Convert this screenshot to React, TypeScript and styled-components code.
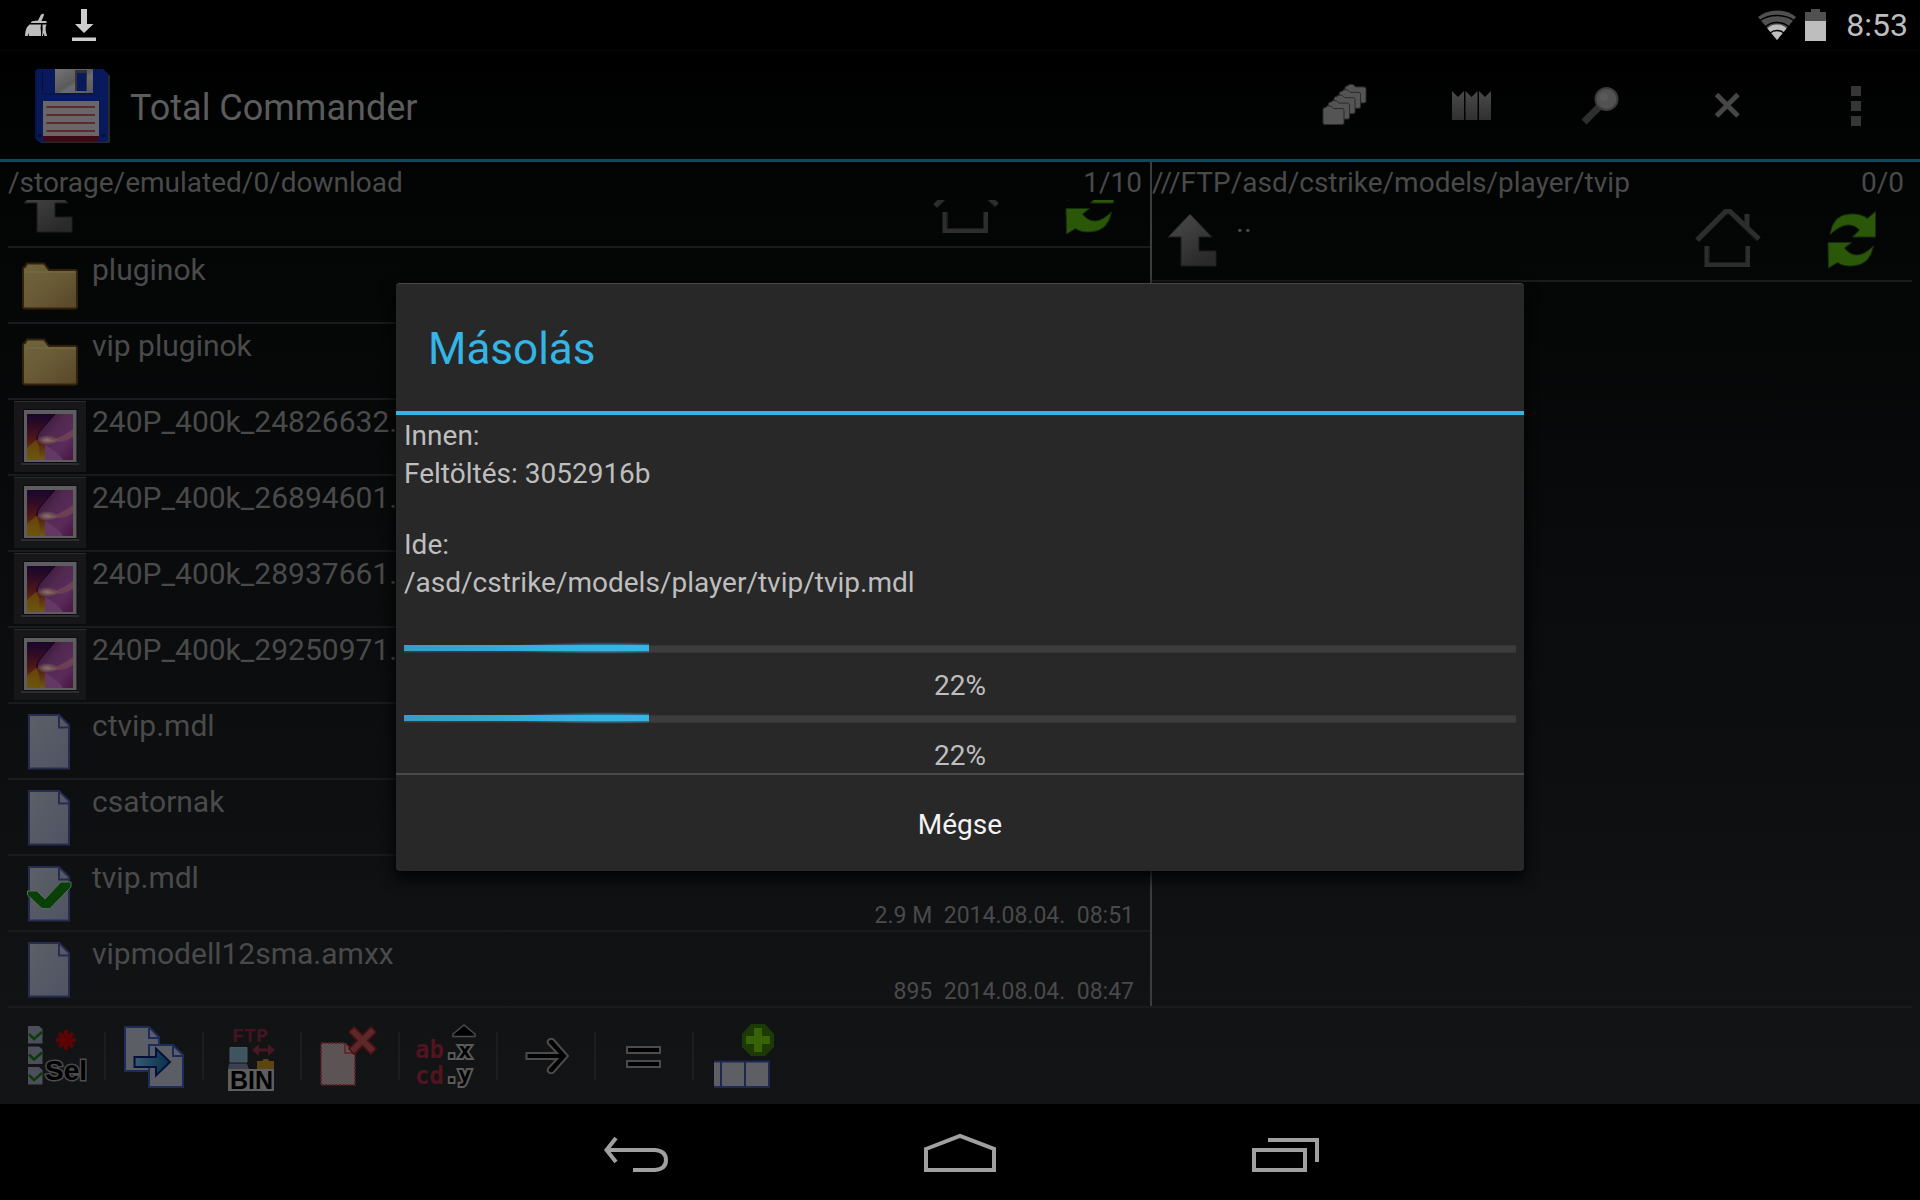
import React from "react";
import styled, { createGlobalStyle } from "styled-components";

const color = {
  accent: "#33b5e5",
  accentDim: "#14485c",
  text: "#4a4a4a",
  rule: "#1a1b1c",
  divider: "#3c3c3c",
  dialog: "#282828",
};

const GlobalStyle = createGlobalStyle`
  *, *::before, *::after { box-sizing: border-box; }
  html, body, #root { height: 100%; }
  body {
    margin: 0;
    background: #000;
    font-family: Roboto, "Noto Sans", sans-serif;
    overflow: hidden;
  }
  svg { display: block; flex: none; }
  button {
    border: 0;
    padding: 0;
    background: none;
    color: inherit;
    font: inherit;
    cursor: pointer;
  }
`;

/* ---------- shell ---------- */

const Screen = styled.div`
  height: 100%;
  display: flex;
  flex-direction: column;
`;

const StatusBar = styled.header`
  height: 50px;
  padding: 0 12px 0 24px;
  display: flex;
  align-items: center;
  justify-content: space-between;
  color: #bebebe;
`;

const StatusGroup = styled.div<{ $gap: number }>`
  display: flex;
  align-items: center;
  gap: ${(p) => p.$gap}px;
`;

const Clock = styled.time`
  padding-left: 12px;
  font-size: 32px;
  line-height: 38px;
`;

const AppWindow = styled.div`
  position: relative;
  flex: 1;
  min-height: 0;
  display: flex;
  flex-direction: column;
  background: linear-gradient(#000 0%, #030505 15%, #101214 88%, #121416 100%);
  box-shadow: inset 0 1px #060606;
`;

const ActionBar = styled.div`
  height: 112px;
  flex: none;
  display: flex;
  align-items: center;
  border-bottom: 3px solid ${color.accentDim};
`;

const AppTitle = styled.h1`
  flex: 1;
  margin: 0;
  padding: 6px 0 0 20px;
  font-size: 36px;
  font-weight: 400;
  line-height: 42px;
  color: #5c5c5c;
`;

const LogoBox = styled.div`
  padding-left: 34px;
`;

const ActionButton = styled.button`
  width: 128px;
  height: 96px;
  display: grid;
  place-items: center;
`;

/* ---------- panes ---------- */

const Panes = styled.main`
  flex: 1;
  min-height: 0;
  display: grid;
  grid-template-columns: 115fr 77fr;
  color: ${color.text};
`;

const Pane = styled.section`
  min-width: 0;
  min-height: 0;
  display: flex;
  flex-direction: column;

  & + & {
    border-left: 2px solid ${color.divider};
  }
`;

const PaneHeader = styled.div<{ $left: number; $right: number }>`
  height: 38px;
  flex: none;
  padding: 0 ${(p) => p.$right}px 0 ${(p) => p.$left}px;
  display: flex;
  justify-content: space-between;
  font-size: 28px;
  line-height: 42px;
`;

const FileList = styled.ul<{ $left: number; $right: number }>`
  flex: 1;
  min-height: 0;
  margin: 0 ${(p) => p.$right}px 0 ${(p) => p.$left}px;
  padding: 0;
  list-style: none;
  overflow: hidden;
`;

const UpRow = styled.li<{ $scrolled?: boolean }>`
  height: 82px;
  margin-top: ${(p) => (p.$scrolled ? -34 : 0)}px;
  padding: 1px 0 0 6px;
  display: flex;
  gap: 6px;
  border-bottom: 2px solid ${color.rule};
`;

const UpLabel = styled.span`
  flex: 1;
  padding-top: 3px;
  font-size: 30px;
  line-height: 36px;
`;

const PaneTools = styled.div`
  display: flex;
  gap: 4px;
`;

const PaneButton = styled.button`
  width: 120px;
  height: 78px;
  display: grid;
  place-items: center;
`;

const FileRow = styled.li`
  height: 76px;
  padding: 1px 16px 1px 6px;
  display: flex;
  gap: 6px;
  border-bottom: 2px solid ${color.rule};

  &:last-child {
    height: 74px;
    border-bottom: 0;
  }
`;

const FileInfo = styled.div`
  flex: 1;
  min-width: 0;
  padding-top: 3px;
  display: flex;
  flex-direction: column;
  justify-content: space-between;
`;

const FileName = styled.span`
  font-size: 30px;
  line-height: 36px;
  white-space: nowrap;
`;

const FileMeta = styled.span`
  font-size: 23px;
  line-height: 26px;
  text-align: right;
  white-space: pre;
`;

/* ---------- toolbars ---------- */

const Toolbar = styled.div`
  height: 98px;
  flex: none;
  margin: 0 8px;
  display: flex;
  align-items: center;
  border-top: 2px solid ${color.rule};
`;

const ToolButton = styled.button`
  width: 98px;
  height: 48px;
  display: flex;
  align-items: center;
  justify-content: center;
  border-right: 2px solid #1b1d1f;

  &:last-child {
    border-color: transparent;
  }
`;

const NavBar = styled.nav`
  height: 96px;
  flex: none;
  display: flex;
  justify-content: center;
  gap: 164px;
  background: #000;
`;

const NavButton = styled.button`
  width: 160px;
  display: grid;
  place-items: center;
`;

/* ---------- dialog ---------- */

const Overlay = styled.div`
  position: absolute;
  inset: 0;
  display: flex;
  align-items: center;
  justify-content: center;
`;

const DialogBox = styled.div`
  width: 1128px;
  max-width: 90%;
  display: flex;
  flex-direction: column;
  background: ${color.dialog};
  border-top: 1px solid #484848;
  border-radius: 4px;
  box-shadow: 0 6px 14px 2px rgba(0, 0, 0, 0.8);
`;

const DialogTitle = styled.h2`
  margin: 0;
  padding: 4px 32px 0;
  font-size: 44px;
  font-weight: 400;
  line-height: 123px;
  color: ${color.accent};
  border-bottom: 4px solid ${color.accent};
`;

const DialogBody = styled.div`
  padding: 2px 8px 1px;
  font-size: 28px;
  line-height: 38px;
  color: #bebebe;
`;

const Paths = styled.dl`
  margin: 0 0 43px;
  display: flex;
  flex-direction: column;
  gap: 33px;

  dd { margin: 0; }
`;

const Progress = styled.div`
  display: flex;
  flex-direction: column;
  gap: 16px;
  text-align: center;
  line-height: 33px;

  & + & { margin-top: 13px; }
`;

const Track = styled.div`
  height: 8px;
  background: #3d3d3d;
  border: solid #343434;
  border-width: 1px 0;
`;

const Fill = styled.div`
  position: relative;
  height: 6px;
  margin-top: -1px;
  background: linear-gradient(90deg, #369dc7, ${color.accent} 80%);

  &::after {
    content: "";
    position: absolute;
    inset: -4px 0 -4px 30%;
    background: radial-gradient(ellipse at 75% 50%, rgba(51, 181, 229, 0.8) 20%, transparent 60%);
  }
`;

const CancelButton = styled.button`
  height: 98px;
  padding-top: 3px;
  border-top: 2px solid #4a4a4a;
  font-size: 28px;
  line-height: 33px;
  color: #f3f3f3;
`;

/* ---------- status icons ---------- */

const BroomIcon = () => (
  <svg width="24" height="24" viewBox="0 0 24 24" fill="#bebebe">
    <path d="M17 1.500 19.500 .5l.5 1.500L17.500 8h5v2H7V9q2-1.500 7-1.500z" />
    <path d="M5.500 11.500H17q-1 4 0 7V23H5l-.500-3-.800 3H1q0-8 4.500-11.500zM18.500 11.500h4q-2 4 .5 11.500h-2.500l-1-3-.500 3H18q1-6 .500-11.500z" />
  </svg>
);

const DownloadIcon = () => (
  <svg width="24" height="32" viewBox="0 0 24 32" fill="#cdcdcd">
    <path d="M9 0h6v15h6.500L12 24 3 15h6zM0 28.500h24V32H0z" />
  </svg>
);

const WifiIcon = () => (
  <svg width="40" height="32" viewBox="0 0 40 32">
    <path d="M20 31 1 8Q9 1.500 20 1.500T39 8z" fill="#505050" />
    <path d="M20 31 10.500 19.500Q14 15.500 20 15.500t9.500 4z" fill="#bebebe" />
    <path d="M3 11.500Q10 6.500 20 6.500t17 5M8 18Q13 13.500 20 13.500T32 18M13 24q3-2.500 7-2.500t7 2.500" fill="none" stroke="#000" strokeWidth="1.500" />
  </svg>
);

const BatteryIcon = () => (
  <svg width="21" height="32" viewBox="0 0 21 32">
    <path d="M6 0h9v3h6v9H0V3h6z" fill="#505050" />
    <path d="M0 12h21v20H0z" fill="#bebebe" />
  </svg>
);

/* ---------- action bar icons ---------- */

const FloppyLogo = () => (
  <svg width="76" height="76" viewBox="0 0 76 76">
    <defs>
      <linearGradient id="shutter" x1="0" y1="0" x2="1" y2="1">
        <stop offset="0" stopColor="#747474" />
        <stop offset=".5" stopColor="#5a5a5a" />
        <stop offset=".6" stopColor="#6c6c6c" />
        <stop offset="1" stopColor="#585858" />
      </linearGradient>
    </defs>
    <path d="M6 5h66l4 4v66l-1 1H7l-3-3z" fill="#262829" />
    <path d="M3 2h66l5 5v66l-2 2H5l-4-4V4z" fill="#081a5c" />
    <path d="M8.500 3v24M2 3v68" stroke="#041040" />
    <path d="M9 27h50" stroke="#041040" />
    <path d="M21 2h38v24H21z" fill="url(#shutter)" />
    <path d="M41 3h12v21H41z" fill="#333" />
    <path d="M43 6h9v18h-9z" fill="#081a5c" />
    <path d="M9 34h56v39H9z" fill="#686868" />
    <path d="M9 69h56v5H9z" fill="#3c0a12" />
    <path d="M12.500 40H61M12.500 48H61M12.500 56H61M12.500 64H61" stroke="#5c141c" strokeWidth="1.500" />
    <path d="M4 67h3v3H4zM68 67h3v3h-3z" fill="#040c30" />
  </svg>
);

const FoldersIcon = () => (
  <svg width="48" height="48" viewBox="0 0 48 48">
    {[4, 3, 2, 1, 0].map((i) => (
      <path
        key={i}
        transform={`translate(${i * 5.5} ${i * -5.4})`}
        d="M3 28.500Q3 26.500 5 26.500h1l1-1.500h4l2.500 2.500H22q2 0 2 2V42q0 1.500-2 1.500H5Q3 43.500 3 42z"
        fill="#545454"
        stroke="#2a2a2a"
      />
    ))}
  </svg>
);

const ColumnsIcon = () => (
  <svg width="48" height="48" viewBox="0 0 48 48">
    <defs>
      <linearGradient id="col" x1="0" y1="0" x2="0" y2="1">
        <stop offset="0" stopColor="#4a4a4a" />
        <stop offset="1" stopColor="#303030" />
      </linearGradient>
    </defs>
    <path d="M4 10l6 6 6-6v29H4zM17.500 10l6 6 6-6v29h-12zM31 10l6 6 6-6v29H31z" fill="url(#col)" />
  </svg>
);

const SearchIcon = () => (
  <svg width="48" height="48" viewBox="0 0 48 48">
    <path d="M23 26 8 41" stroke="#2e2e2e" strokeWidth="7" />
    <circle cx="30.500" cy="18" r="11" fill="#525252" stroke="#3c3c3c" strokeWidth="2" />
    <circle cx="28" cy="16" r="4" fill="#5a5a5a" />
  </svg>
);

const CloseIcon = () => (
  <svg width="48" height="48" viewBox="0 0 48 48">
    <path d="M12.500 13.500 34 35M34 13.500 12.500 35" stroke="#464646" strokeWidth="5" />
  </svg>
);

const MoreIcon = () => (
  <svg width="48" height="48" viewBox="0 0 48 48" fill="#363636">
    <path d="M19 5h10v10H19zM19 20h10v10H19zM19 35h10v10H19z" />
  </svg>
);

/* ---------- pane icons ---------- */

const UpIcon = () => (
  <svg width="72" height="72" viewBox="0 0 72 72">
    <defs>
      <linearGradient id="up" x1="0" y1="0" x2=".6" y2="1">
        <stop offset="0" stopColor="#4c4c4c" />
        <stop offset="1" stopColor="#2a2a2a" />
      </linearGradient>
    </defs>
    <path d="M32 13 54 36H41v14h17v15H23V36H10z" fill="url(#up)" stroke="#1c1c1c" />
  </svg>
);

const HomeIcon = () => (
  <svg width="72" height="64" viewBox="0 0 72 64" fill="none" stroke="#2d2d2d">
    <g strokeWidth="5">
      <path d="M5 32 33.500 3.500h4.500L67 31" />
      <path d="M55 6v15M15 38v18.500h40.500V38" />
    </g>
    <g stroke="#1a1a1a">
      <path d="M7.500 33.500 35 6h2L65 33.500M17 38v16.500h36.500V38" />
    </g>
  </svg>
);

const RefreshIcon = () => (
  <svg width="56" height="64" viewBox="0 0 56 64" fill="#2a5708" stroke="#16300a">
    <path d="M6 26.500Q9 6 27 6q10-.5 16.500 4.500L51.500 3.500V29H28.500l7-7Q24 10 6 26.500z" />
    <path d="M4 34.500h23.500l-7 5.500Q32 55 49.500 38 46 57.500 28 58q-9 .5-14.500-3.500L4.500 60z" />
  </svg>
);

const FolderIcon = () => (
  <svg width="72" height="72" viewBox="0 0 72 72">
    <defs>
      <linearGradient id="folder" x1="0" y1="0" x2="1" y2="1">
        <stop offset="0" stopColor="#6e653e" />
        <stop offset=".5" stopColor="#695a36" />
        <stop offset="1" stopColor="#584628" />
      </linearGradient>
    </defs>
    <path d="M9 20q0-2 2-2l2-3.500h17l5 6.500h26q2 0 2 2v34.500q0 2-2 2H11q-2 0-2-2z" fill="url(#folder)" stroke="#33220a" strokeWidth="2" />
    <path d="M11 23h51" stroke="#7a6c46" />
  </svg>
);

const ThumbIcon = () => (
  <svg width="72" height="72" viewBox="0 0 72 72">
    <defs>
      <linearGradient id="sky" x1="0" y1="0" x2="0" y2="1">
        <stop offset="0" stopColor="#18062c" />
        <stop offset=".3" stopColor="#340c24" />
        <stop offset=".6" stopColor="#541c14" />
        <stop offset="1" stopColor="#6e5a0c" />
      </linearGradient>
      <linearGradient id="petal" x1="0" y1="0" x2="1" y2="1">
        <stop offset="0" stopColor="#2c0c34" />
        <stop offset=".4" stopColor="#50284e" />
        <stop offset=".7" stopColor="#5a2c5c" />
        <stop offset="1" stopColor="#4a1440" />
      </linearGradient>
      <radialGradient id="glow">
        <stop offset="0" stopColor="#8c7460" />
        <stop offset="1" stopColor="#8c7460" stopOpacity="0" />
      </radialGradient>
    </defs>
    <path d="M0 0h72v71H0z" fill="#17171a" />
    <path d="M0 .5h72" stroke="#2c2c30" />
    <path d="M7 63h58" stroke="#2e2e30" strokeWidth="2" />
    <path d="M9.500 8.500h53.500v53H9.500z" fill="#5e5e5e" stroke="#0c0a14" />
    <path d="M13 13h46v46H13z" fill="url(#sky)" />
    <path d="M41 13 26 30q-3 4-3 8l8 6v15h28V13z" fill="url(#petal)" />
    <path d="M59 28v8Q46 44 32 40q14-2 27-12z" fill="#6c4054" />
    <path d="M31 44q12 6 18 15H31z" fill="#643864" />
    <path d="M13 59V47l9-8q5 6 3 20H13z" fill="#6e540c" opacity=".7" />
    <ellipse cx="33" cy="39" rx="11" ry="5" fill="url(#glow)" />
    <path d="M41 13 26 30q-4 5-3 9" fill="none" stroke="#100414" />
  </svg>
);

const PAGE = "M15 10h30l10 10v43.500H15z";

const FileIcon = ({ checked = false }: { checked?: boolean }) => (
  <svg width="72" height="72" viewBox="0 0 72 72">
    <defs>
      <linearGradient id="page" x1="0" y1="0" x2="1" y2="1">
        <stop offset="0" stopColor="#5c6066" />
        <stop offset="1" stopColor="#505364" />
      </linearGradient>
    </defs>
    <path d={PAGE} fill="url(#page)" stroke="#262c50" strokeWidth="2" />
    <path d="M45 10v12.500h10" fill="none" stroke="#262c50" strokeWidth="2" />
    {checked && (
      <path d="M13.500 34H23l8 8 16-17h10v5L36 51.500h-8L13.500 38z" fill="#084008" stroke="#5a6a5a" />
    )}
  </svg>
);

/* ---------- toolbar icons ---------- */

const SelectIcon = () => (
  <svg width="72" height="72" viewBox="0 0 72 72">
    {[6, 26.5, 47].map((y) => (
      <g key={y}>
        <path d={`M8 ${y}h11l3.500 3v14.500H8z`} fill="#4c4f5a" />
        <path d={`M9 ${y + 8}l5 5 8-7`} fill="none" stroke="#0a3c0c" strokeWidth="2.500" />
      </g>
    ))}
    <g stroke="#5a0404" strokeWidth="4.500">
      <path d="M46 10v20M36 20h20M39 13l14 14M53 13 39 27" />
    </g>
    <text x="25" y="60" fontFamily="Liberation Sans, sans-serif" fontWeight="700" fontSize="28" fill="#000" stroke="#4c4c4c" strokeWidth="3" paintOrder="stroke">
      Sel
    </text>
  </svg>
);

const CopyIcon = () => (
  <svg width="72" height="72" viewBox="0 0 72 72">
    <defs>
      <linearGradient id="move" x1="0" y1="0" x2="1" y2="0">
        <stop offset="0" stopColor="#3a5a70" />
        <stop offset="1" stopColor="#06304c" />
      </linearGradient>
    </defs>
    <g fill="#5c5e66" stroke="#1c2a5c" strokeWidth="2">
      <path d="M7 7h24l10 10v34H7z" />
      <path d="M31 7v11h10" fill="none" />
      <path d="M31 25h24l10 10v32H31z" />
      <path d="M55 25v11h10" fill="none" />
    </g>
    <path d="M16.500 37H38v-8.500L52 42 38 55.500V47H16.500z" fill="url(#move)" stroke="#06103c" strokeWidth="2" />
  </svg>
);

const FtpIcon = () => (
  <svg width="72" height="72" viewBox="0 0 72 72">
    <text x="16" y="22" fontFamily="Liberation Mono, monospace" fontWeight="700" fontSize="20" fill="#441420">
      FTP
    </text>
    <path d="M36 30l7-6v4.500h9V24l7 6-7 6v-4.500h-9V36z" fill="#4a1824" />
    <path d="M14 27.500h17V42H14z" fill="#3e5560" stroke="#4c5864" />
    <path d="M13 43.500h18l2 6H12z" fill="#3c4050" />
    <path d="M41 41h5l2-2h4l1 2h5v9H41z" fill="#5c4510" />
    <path d="M12 49h46v22H12z" fill="#5e5e5e" />
    <text x="14" y="68.500" fontFamily="Liberation Sans, sans-serif" fontWeight="700" fontSize="25" fill="#000">
      BIN
    </text>
  </svg>
);

const DeleteIcon = () => (
  <svg width="72" height="72" viewBox="0 0 72 72">
    <path d="M7 23h24l10 10v32H7z" fill="#5c5454" />
    <path d="M7 23h24l10 10v32H7z" fill="none" stroke="#5c1c20" strokeWidth="2" strokeDasharray="2 1.500" />
    <path d="M31 23v10h10" fill="none" stroke="#5c2c30" strokeWidth="2" />
    <path d="M37 9l23 23M60 9 37 32" stroke="#4a1014" strokeWidth="9" />
    <path d="M38 10l21 21M59 10 38 31" stroke="#5c2828" strokeWidth="6" />
  </svg>
);

const RenameIcon = () => (
  <svg width="72" height="72" viewBox="0 0 72 72" fontFamily="DejaVu Sans Mono, monospace" fontWeight="700" fontSize="24">
    <g fill="#52141f">
      <text x="3" y="38">ab</text>
      <text x="3" y="64">cd</text>
    </g>
    <g fill="#000" stroke="#5a5a5a" strokeWidth="4" paintOrder="stroke" fontSize="22">
      <text x="33" y="38">.x</text>
      <text x="33" y="62">.y</text>
    </g>
    <path d="M41 14 52 5l11 9v2.500H41z" fill="#000" stroke="#4c4c4c" strokeWidth="1.500" />
  </svg>
);

const ArrowIcon = () => (
  <svg width="72" height="72" viewBox="0 0 72 72">
    <path
      d="M16.500 33H47L38 23.500q-1-2.500 1-4t4.500 0L58 36 43.500 52.500q-2.500 1.500-4.500 0t-1-4L47 39H16.500z"
      fill="#000"
      stroke="#4c4c4c"
      strokeWidth="2"
    />
  </svg>
);

const EqualsIcon = () => (
  <svg width="72" height="72" viewBox="0 0 72 72" fill="#000" stroke="#4c4c4c" strokeWidth="2">
    <path d="M19 27h33v6H19zM19 41h33v6H19z" />
  </svg>
);

const AddIcon = () => (
  <svg width="72" height="72" viewBox="0 0 72 72">
    <path d="M45 4h14l9 10v13l-9 9H45l-9-9V14z" fill="#1c3a06" />
    <path d="M48 8h8v8h8v8h-8v8h-8v-8h-8v-8h8z" fill="#386206" />
    <path d="M8 41h55v26H8z" fill="#5e5f64" />
    <path d="M15 41v26M39 41v26M8 41.500h55V67H8" fill="none" stroke="#1c2850" strokeWidth="2" />
  </svg>
);

/* ---------- navigation icons ---------- */

const BackIcon = () => (
  <svg width="72" height="48" viewBox="0 0 72 48" fill="none" stroke="#a0a0a0" strokeWidth="4">
    <path d="M16 10 6.500 22 16 34" />
    <path d="M7 22h48q11 1 11 10t-11 10H33" />
  </svg>
);

const NavHomeIcon = () => (
  <svg width="72" height="48" viewBox="0 0 72 48" fill="none" stroke="#a0a0a0" strokeWidth="4">
    <path d="M2 21 36 8l34 13v21H2z" />
  </svg>
);

const RecentsIcon = () => (
  <svg width="72" height="48" viewBox="0 0 72 48" fill="none" stroke="#a0a0a0" strokeWidth="4">
    <path d="M6 22h51v20H6zM20 12h49v22" />
  </svg>
);

/* ---------- data ---------- */

type Kind = "folder" | "image" | "file" | "checked";

const files: { name: string; kind: Kind; meta?: string }[] = [
  { name: "pluginok", kind: "folder" },
  { name: "vip pluginok", kind: "folder" },
  { name: "240P_400k_24826632.", kind: "image" },
  { name: "240P_400k_26894601.", kind: "image" },
  { name: "240P_400k_28937661.", kind: "image" },
  { name: "240P_400k_29250971.", kind: "image" },
  { name: "ctvip.mdl", kind: "file" },
  { name: "csatornak", kind: "file" },
  { name: "tvip.mdl", kind: "checked", meta: "2.9 M  2014.08.04.  08:51" },
  { name: "vipmodell12sma.amxx", kind: "file", meta: "895  2014.08.04.  08:47" },
];

const icons: Record<Kind, React.ReactNode> = {
  folder: <FolderIcon />,
  image: <ThumbIcon />,
  file: <FileIcon />,
  checked: <FileIcon checked />,
};

const actions = [
  { label: "Könyvtárak", icon: <FoldersIcon /> },
  { label: "Könyvjelzők", icon: <ColumnsIcon /> },
  { label: "Keresés", icon: <SearchIcon /> },
  { label: "Bezárás", icon: <CloseIcon /> },
  { label: "Menü", icon: <MoreIcon /> },
];

const tools = [
  { label: "Kijelölés", icon: <SelectIcon /> },
  { label: "Másolás", icon: <CopyIcon /> },
  { label: "FTP mód", icon: <FtpIcon /> },
  { label: "Törlés", icon: <DeleteIcon /> },
  { label: "Átnevezés", icon: <RenameIcon /> },
  { label: "Másik panel", icon: <ArrowIcon /> },
  { label: "Azonos könyvtár", icon: <EqualsIcon /> },
  { label: "Gomb hozzáadása", icon: <AddIcon /> },
];

const ProgressBar = ({ label, value }: { label: string; value: number }) => (
  <Progress>
    <Track role="progressbar" aria-label={label} aria-valuenow={value} aria-valuemin={0} aria-valuemax={100}>
      <Fill style={{ width: `${value}%` }} />
    </Track>
    <span>{value}%</span>
  </Progress>
);

const ParentRow = ({ scrolled, label }: { scrolled?: boolean; label?: string }) => (
  <UpRow $scrolled={scrolled}>
    <UpIcon />
    <UpLabel>{label}</UpLabel>
    <PaneTools>
      <PaneButton aria-label="Kezdőlap"><HomeIcon /></PaneButton>
      <PaneButton aria-label="Frissítés"><RefreshIcon /></PaneButton>
    </PaneTools>
  </UpRow>
);

export default function App() {
  return (
    <>
      <GlobalStyle />
      <Screen>
        <StatusBar>
          <StatusGroup $gap={24}>
            <BroomIcon />
            <DownloadIcon />
          </StatusGroup>
          <StatusGroup $gap={8}>
            <WifiIcon />
            <BatteryIcon />
            <Clock>8:53</Clock>
          </StatusGroup>
        </StatusBar>

        <AppWindow>
          <ActionBar>
            <LogoBox><FloppyLogo /></LogoBox>
            <AppTitle>Total Commander</AppTitle>
            {actions.map((a) => (
              <ActionButton key={a.label} aria-label={a.label}>{a.icon}</ActionButton>
            ))}
          </ActionBar>

          <Panes>
            <Pane>
              <PaneHeader $left={8} $right={8}>
                <span>/storage/emulated/0/download</span>
                <span>1/10</span>
              </PaneHeader>
              <FileList $left={8} $right={0}>
                <ParentRow scrolled />
                {files.map((f) => (
                  <FileRow key={f.name}>
                    {icons[f.kind]}
                    <FileInfo>
                      <FileName>{f.name}</FileName>
                      {f.meta && <FileMeta>{f.meta}</FileMeta>}
                    </FileInfo>
                  </FileRow>
                ))}
              </FileList>
            </Pane>
            <Pane>
              <PaneHeader $left={0} $right={16}>
                <span>///FTP/asd/cstrike/models/player/tvip</span>
                <span>0/0</span>
              </PaneHeader>
              <FileList $left={0} $right={8}>
                <ParentRow label=".." />
              </FileList>
            </Pane>
          </Panes>

          <Toolbar>
            {tools.map((t) => (
              <ToolButton key={t.label} aria-label={t.label}>{t.icon}</ToolButton>
            ))}
          </Toolbar>

          <Overlay>
            <DialogBox role="dialog" aria-modal="true" aria-labelledby="dialog-title">
              <DialogTitle id="dialog-title">Másolás</DialogTitle>
              <DialogBody>
                <Paths>
                  <div>
                    <dt>Innen:</dt>
                    <dd>Feltöltés: 3052916b</dd>
                  </div>
                  <div>
                    <dt>Ide:</dt>
                    <dd>/asd/cstrike/models/player/tvip/tvip.mdl</dd>
                  </div>
                </Paths>
                <ProgressBar label="Fájl" value={22} />
                <ProgressBar label="Összes" value={22} />
              </DialogBody>
              <CancelButton>Mégse</CancelButton>
            </DialogBox>
          </Overlay>
        </AppWindow>

        <NavBar>
          <NavButton aria-label="Vissza"><BackIcon /></NavButton>
          <NavButton aria-label="Kezdőképernyő"><NavHomeIcon /></NavButton>
          <NavButton aria-label="Legutóbbiak"><RecentsIcon /></NavButton>
        </NavBar>
      </Screen>
    </>
  );
}
